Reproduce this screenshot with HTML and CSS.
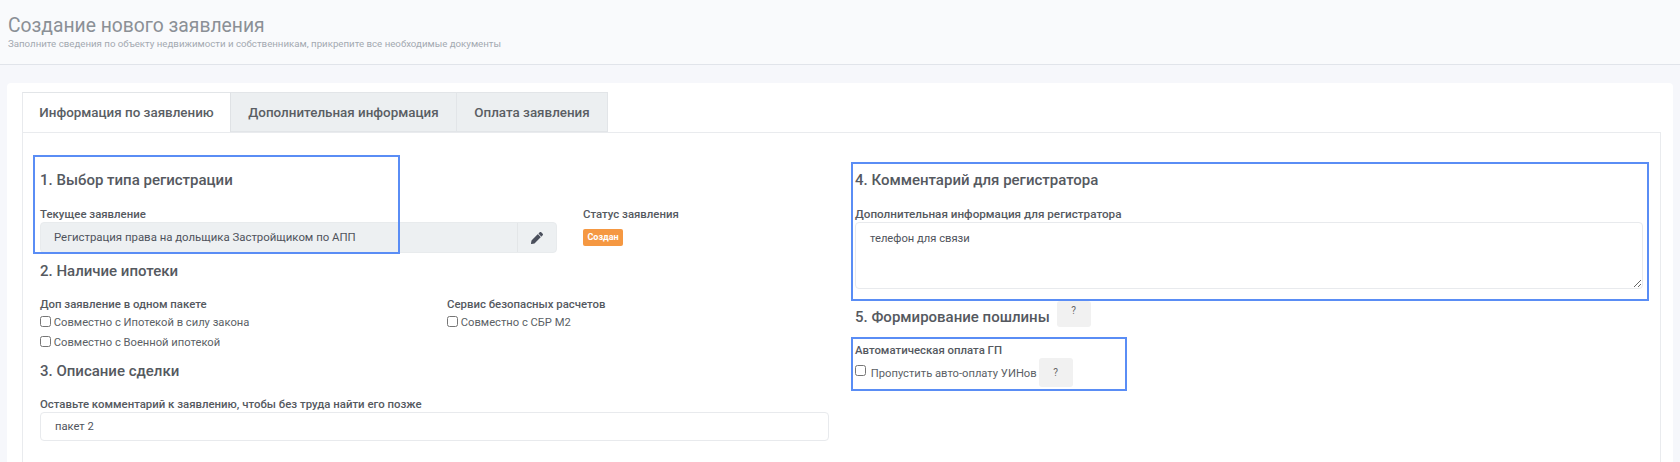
FILE: index.html
```html
<!DOCTYPE html>
<html lang="ru">
<head>
    <meta charset="UTF-8">
    <title>Создание нового заявления</title>
    <link rel="stylesheet" href="styles.css">
</head>
<body>
    <div class="page-header">
        <h1>Создание нового заявления</h1>
        <p>Заполните сведения по объекту недвижимости и собственникам, прикрепите все необходимые документы</p>
    </div>

    <div class="card">
        <div class="tabs">
            <a class="tab active">Информация по заявлению</a>
            <a class="tab">Дополнительная информация</a>
            <a class="tab">Оплата заявления</a>
        </div>

        <div class="tab-pane">
            <div class="col-left">
                <h2>1. Выбор типа регистрации</h2>
                <div class="type-row">
                    <div>
                        <div class="label">Текущее заявление</div>
                        <div class="input-group">
                            <div class="input-readonly">Регистрация права на дольщика Застройщиком по АПП</div>
                            <div class="input-btn">
                                <svg width="12" height="12" viewBox="0 0 512 512"><path fill="#4a4f5c" d="M497.9 142.1l-46.1 46.1c-4.7 4.7-12.3 4.7-17 0l-111-111c-4.7-4.7-4.7-12.3 0-17l46.1-46.1c18.7-18.7 49.1-18.7 67.9 0l60.1 60.1c18.8 18.7 18.8 49.1 0 67.9zM284.2 99.8L21.6 362.4.4 483.9c-2.9 16.4 11.4 30.6 27.8 27.8l121.5-21.3 262.6-262.6c4.7-4.7 4.7-12.3 0-17l-111-111c-4.8-4.7-12.4-4.7-17.1 0z"/></svg>
                            </div>
                        </div>
                    </div>
                    <div>
                        <div class="label">Статус заявления</div>
                        <span class="badge">Создан</span>
                    </div>
                </div>

                <h2 class="section-gap">2. Наличие ипотеки</h2>
                <div class="mortgage-row">
                    <div>
                        <div class="label">Доп заявление в одном пакете</div>
                        <label class="check"><input type="checkbox"> Совместно с Ипотекой в силу закона</label>
                        <label class="check"><input type="checkbox"> Совместно с Военной ипотекой</label>
                    </div>
                    <div>
                        <div class="label">Сервис безопасных расчетов</div>
                        <label class="check"><input type="checkbox"> Совместно с СБР М2</label>
                    </div>
                </div>

                <h2 class="section-gap-small">3. Описание сделки</h2>
                <div class="label label-gap">Оставьте комментарий к заявлению, чтобы без труда найти его позже</div>
                <input class="text-input" type="text" value="пакет 2">
            </div>

            <div class="col-right">
                <h2>4. Комментарий для регистратора</h2>
                <div class="label label-wide">Дополнительная информация для регистратора</div>
                <textarea class="text-area">телефон для связи</textarea>

                <div class="fee-row">
                    <h2>5. Формирование пошлины</h2>
                    <span class="help-btn">?</span>
                </div>

                <div class="label label-gap">Автоматическая оплата ГП</div>
                <div class="skip-row">
                    <label class="check check-inline"><input type="checkbox"> Пропустить авто-оплату УИНов</label>
                    <span class="help-btn help-tall">?</span>
                </div>
            </div>

            <!-- blue annotation frames on top of the form -->
            <div class="frame frame-type"></div>
            <div class="frame frame-comment"></div>
            <div class="frame frame-auto"></div>
        </div>
    </div>
</body>
</html>
```

FILE: styles.css
```css
html, body { height: 462px; overflow: hidden; }
body { margin: 0; background: #f6f7fb; font-family: Roboto, Arial, sans-serif; color: #5b5f66; }

.page-header { height: 65px; box-sizing: border-box; padding: 14px 8px 0; background: #f9fafc; border-bottom: 1px solid #e1e4ea; }
.page-header h1 { margin: 0; font-size: 19.3px; line-height: 23px; font-weight: 400; color: #8b9096; }
.page-header p { margin: 0; font-size: 9.7px; line-height: 13px; color: #a3a9b1; }

.card { margin: 18px 7px 0; padding: 9px 12px 0 15px; height: 379px; background: #fff; border-radius: 4px; }

.tabs { display: flex; height: 40px; }
.tab { display: flex; align-items: center; justify-content: center; box-sizing: border-box; font-size: 13.4px; font-weight: 500; color: #5a5e64; background: #eceff1; border: 1px solid #e2e5e8; border-left: 0; }
.tab:nth-child(1) { width: 209px; background: #fff; border-left: 1px solid #e8eaed; border-bottom: 0; border-right: 1px solid #dfe2e5; }
.tab:nth-child(2) { width: 226px; }
.tab:nth-child(3) { width: 151px; }

.tab-pane { position: relative; display: flex; height: 339px; box-sizing: border-box; padding: 35px 17px 0 17px; border: 1px solid #e9ebee; border-bottom: 0; }

.col-left { width: 789px; margin-right: 26px; }
.col-right { width: 788px; }

h2 { margin: 0; font-size: 15px; line-height: 24px; font-weight: 500; color: #55595f; }
.section-gap { margin-top: 6px; }
.section-gap-small { margin-top: 7px; }

.label { margin-top: 14px; font-size: 11.4px; line-height: 16px; font-weight: 500; color: #55595f; }
.label-wide { font-size: 11.7px; }
.label-gap { margin-top: 13px; }

.type-row { display: grid; grid-template-columns: 517px 1fr; column-gap: 26px; }
.mortgage-row { display: grid; grid-template-columns: 407px 1fr; margin-top: -1px; }

.input-group { display: flex; height: 31px; background: #edf0f2; border-radius: 4px; border: 1px solid #e8ebed; box-sizing: border-box; }
.input-readonly { flex: 1; padding-left: 13px; font-size: 11.4px; line-height: 29px; color: #4f535c; }
.input-btn { display: flex; width: 38px; align-items: center; justify-content: center; border-left: 1px solid #e3e6e8; }

.badge { display: inline-block; width: 40px; height: 17px; margin-top: 7px; border-radius: 2px; background: #f59842; color: #fff; font-size: 9px; line-height: 17px; font-weight: 700; text-align: center; }

.check { display: flex; height: 20px; padding-top: 1px; box-sizing: border-box; align-items: center; font-size: 11.2px; color: #5b5f66; white-space: pre; }
.check input { width: 11px; height: 11px; margin: 0 0 2px 0; }
.check-inline { height: 29px; }
.check-inline input { margin: 0 2px 5px 0; }

.text-input { display: block; width: 100%; height: 29px; box-sizing: border-box; padding: 0 14px; border: 1px solid #e8eaed; border-radius: 4px; font: 11.2px Roboto, Arial, sans-serif; color: #4f535c; }
.text-area { display: block; width: 100%; height: 67px; box-sizing: border-box; padding: 9px 14px; border: 1px solid #e8eaed; border-radius: 4px; font: 11.2px Roboto, Arial, sans-serif; color: #4f535c; }

.fee-row { display: flex; align-items: flex-start; margin-top: 12px; }
.fee-row h2 { margin-top: 4px; margin-right: 7px; }

.help-btn { display: flex; width: 34px; height: 26px; align-items: flex-start; justify-content: center; padding-top: 4px; box-sizing: border-box; background: #f1f1f1; border-radius: 3px; font-size: 10px; color: #666; }
.help-tall { height: 29px; margin-left: 2px; padding-top: 9px; }

.skip-row { display: flex; align-items: center; }

/* annotation frames */
.frame { position: absolute; box-sizing: border-box; border: 2px solid #5a8df5; }
.frame-type { left: 10px; top: 22px; width: 367px; height: 99px; }
.frame-comment { left: 828px; top: 29px; width: 798px; height: 139px; }
.frame-auto { left: 828px; top: 204px; width: 276px; height: 54px; }
```
